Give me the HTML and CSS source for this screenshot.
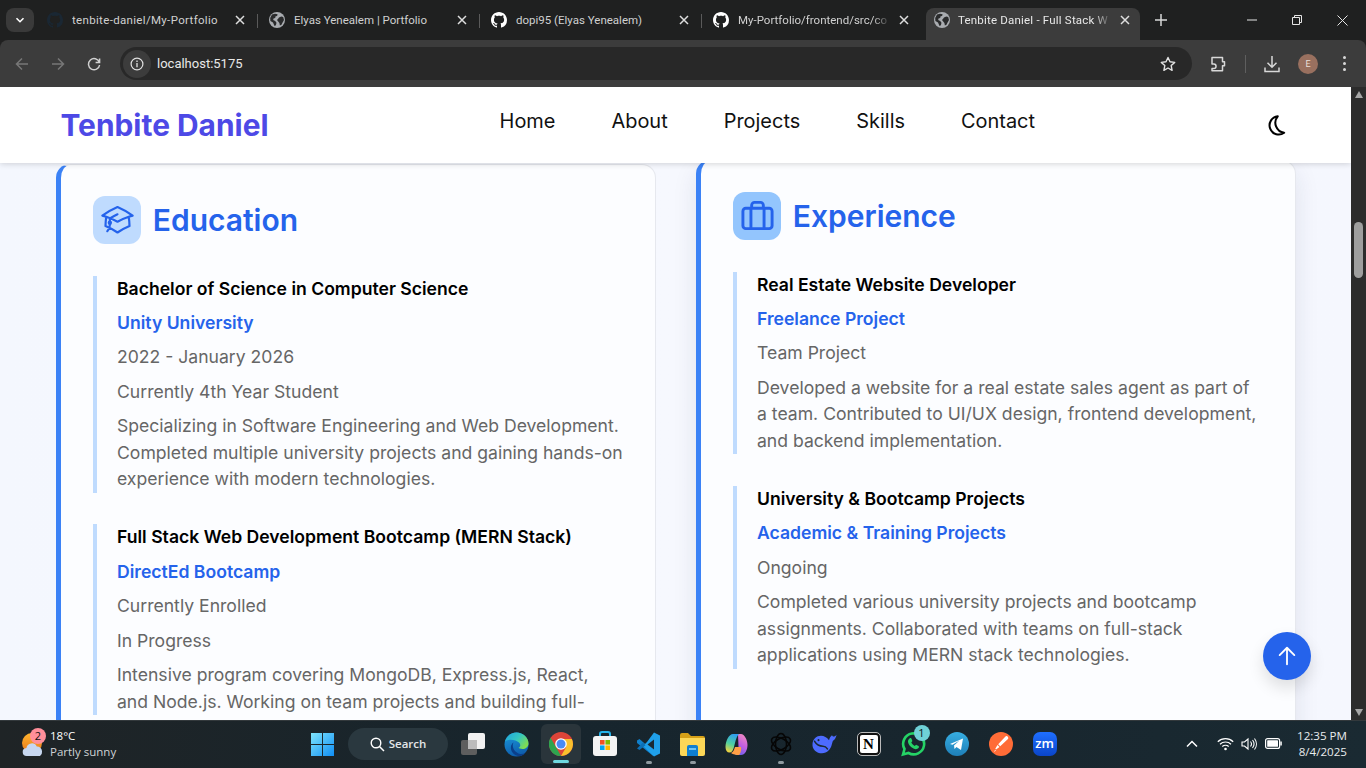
FILE: index.html
```html
<!DOCTYPE html>
<html lang="en">
<head>
<meta charset="utf-8">
<title>Tenbite Daniel - Full Stack Web Developer</title>
<link rel="stylesheet" href="styles.css">
</head>
<body>
<svg class="defs" width="0" height="0" aria-hidden="true">
  <symbol id="gh" viewBox="0 0 16 16"><path fill="currentColor" d="M8 0C3.58 0 0 3.58 0 8c0 3.54 2.29 6.53 5.47 7.59.4.07.55-.17.55-.38 0-.19-.01-.82-.01-1.49-2.01.37-2.53-.49-2.69-.94-.09-.23-.48-.94-.82-1.13-.28-.15-.68-.52-.01-.53.63-.01 1.08.58 1.23.82.72 1.21 1.87.87 2.33.66.07-.52.28-.87.51-1.07-1.78-.2-3.64-.89-3.64-3.95 0-.87.31-1.59.82-2.15-.08-.2-.36-1.02.08-2.12 0 0 .67-.21 2.2.82.64-.18 1.32-.27 2-.27.68 0 1.36.09 2 .27 1.53-1.04 2.2-.82 2.2-.82.44 1.1.16 1.92.08 2.12.51.56.82 1.27.82 2.15 0 3.07-1.87 3.75-3.65 3.95.29.25.54.73.54 1.48 0 1.07-.01 1.93-.01 2.2 0 .21.15.46.55.38A8.013 8.013 0 0016 8c0-4.42-3.58-8-8-8z"/></symbol>
  <symbol id="globe" viewBox="0 0 16 16"><circle cx="8" cy="8" r="8" fill="#a9acb0"/><path fill="#2a2b2c" d="M3 2.6l3-.9 2.6.5-.5 1.7-1.5.4-.4 1.6-1.7.6-.3 1.6 2 1 1.3 1.6-.6 2.6L5.5 14 4 10.6 1.4 9l-.2-3zM10 5.5l2.2-1 2 .6.8 3-1.4 2.3-1.1 2.4-1.6.7-.5-2.6-1.2-1.4-1.2-1.6 1.3-1.3z"/></symbol>
  <symbol id="x" viewBox="0 0 10 10"><path fill="none" stroke="currentColor" stroke-width="1.5" d="M1 1l8 8M9 1l-8 8"/></symbol>
</svg>

<header class="tabstrip">
  <button class="tabsearch"><svg width="10" height="10" viewBox="0 0 10 10"><path fill="none" stroke="#fff" stroke-width="1.6" d="M1.5 3.2L5 6.7l3.500-3.500"/></svg></button>
  <div class="tab"><svg class="fav fav-dark"><use href="#gh"/></svg><span class="tab-title tab-title-wide">tenbite-daniel/My-Portfolio</span><svg class="tab-x"><use href="#x"/></svg></div>
  <div class="tab"><svg class="fav"><use href="#globe"/></svg><span class="tab-title">Elyas Yenealem | Portfolio</span><svg class="tab-x"><use href="#x"/></svg></div>
  <div class="tab"><svg class="fav"><use href="#gh"/></svg><span class="tab-title">dopi95 (Elyas Yenealem)</span><svg class="tab-x"><use href="#x"/></svg></div>
  <div class="tab tab-last"><svg class="fav"><use href="#gh"/></svg><span class="tab-title tab-fade">My-Portfolio/frontend/src/co</span><svg class="tab-x"><use href="#x"/></svg></div>
  <div class="tab tab-active"><svg class="fav"><use href="#globe"/></svg><span class="tab-title tab-fade">Tenbite Daniel - Full Stack W</span><svg class="tab-x"><use href="#x"/></svg></div>
  <svg class="newtab" width="12" height="12" viewBox="0 0 12 12"><path fill="none" stroke="#d8d8d8" stroke-width="1.5" d="M6 0v12M0 6h12"/></svg>
  <div class="winctl">
    <svg width="10" height="10" viewBox="0 0 10 10"><path stroke="#e6e6e6" d="M0 5h10"/></svg>
    <svg width="10" height="10" viewBox="0 0 10 10"><path fill="none" stroke="#e6e6e6" d="M.5 2.500h7v7h-7zM2.500 2.500v-2h7v7h-2"/></svg>
    <svg width="11" height="11" viewBox="0 0 11 11"><path fill="none" stroke="#e6e6e6" d="M.5.5l10 10M10.500.5l-10 10"/></svg>
  </div>
</header>

<div class="toolbar">
  <svg class="tool" width="16" height="16" viewBox="0 0 16 16"><path fill="none" stroke="#777" stroke-width="1.500" d="M14 8H2.500M8 2.500L2.500 8 8 13.500"/></svg>
  <svg class="tool" width="16" height="16" viewBox="0 0 16 16"><path fill="none" stroke="#777" stroke-width="1.500" d="M2 8h11.500M8 2.500L13.500 8 8 13.500"/></svg>
  <svg class="tool" width="16" height="16" viewBox="0 0 16 16"><path fill="none" stroke="#d0d0d0" stroke-width="1.500" d="M13.300 6.200A5.600 5.600 0 1 0 13.600 9M13.600 2.500v4h-4"/></svg>
  <div class="omnibox">
    <span class="site-info"><svg width="14" height="14" viewBox="0 0 14 14"><circle cx="7" cy="7" r="5.900" fill="none" stroke="#e0e0e0" stroke-width="1.200"/><path stroke="#e0e0e0" stroke-width="1.300" d="M7 6v4.200M7 3.600v1.300"/></svg></span>
    <span class="url">localhost:5175</span>
    <svg class="star" width="16" height="16" viewBox="0 0 16 16"><path fill="none" stroke="#e3e3e3" stroke-width="1.400" stroke-linejoin="round" d="M8 1.500l2 4.300 4.700.6-3.500 3.200.9 4.700L8 12l-4.100 2.300.9-4.700L1.300 6.400 6 5.800z"/></svg>
  </div>
  <svg class="ext" width="18" height="18" viewBox="0 0 18 18"><path fill="none" stroke="#d8d8d8" stroke-width="1.500" stroke-linejoin="round" d="M3 2.500h10.500v4.200h2v4h-2v5H3v-2.200h1.800a2 2 0 0 0 0-4.500H3z"/></svg>
  <span class="toolsep"></span>
  <svg class="dl" width="16" height="18" viewBox="0 0 16 18"><path fill="none" stroke="#d8d8d8" stroke-width="1.500" d="M8 1v11M3.500 7.800L8 12.300l4.500-4.500M1 12.500v4h14v-4"/></svg>
  <span class="avatar">E</span>
  <span class="kebab"><i></i><i></i><i></i></span>
</div>

<div class="viewport">
  <div class="page">
    <nav class="navbar">
      <a class="logo">Tenbite Daniel</a>
      <ul class="links">
        <li>Home</li><li>About</li><li>Projects</li><li>Skills</li><li>Contact</li>
      </ul>
      <svg class="moon" width="22" height="22" viewBox="0 0 24 24"><path fill="none" stroke="#000" stroke-width="2.200" stroke-linejoin="round" d="M15 2.500A10 10 0 1 0 22 20.500 11 11 0 0 1 15 2.500z"/></svg>
    </nav>
    <main class="columns">
      <section class="card">
        <div class="card-head">
          <span class="icon-box"><svg width="35" height="35" viewBox="0 0 24 24"><path fill="none" stroke="#2563eb" stroke-width="1.500" stroke-linecap="round" stroke-linejoin="round" d="M4.260 10.147a60.438 60.438 0 0 0-.491 6.347A48.620 48.620 0 0 1 12 20.904a48.620 48.620 0 0 1 8.232-4.410 60.460 60.460 0 0 0-.491-6.347m-15.482 0a50.636 50.636 0 0 0-2.658-.813A59.906 59.906 0 0 1 12 3.493a59.903 59.903 0 0 1 10.399 5.840c-.896.248-1.783.520-2.658.814m-15.482 0A50.717 50.717 0 0 1 12 13.489a50.702 50.702 0 0 1 7.740-3.342M6.750 15a.750.750 0 1 0 0-1.500.750.750 0 0 0 0 1.500Zm0 0v-3.675A55.378 55.378 0 0 1 12 8.443m-7.007 11.550A5.981 5.981 0 0 0 6.750 15.750v-1.500"/></svg></span>
          <h2>Education</h2>
        </div>
        <article class="item">
          <h3>Bachelor of Science in Computer Science</h3>
          <p class="org">Unity University</p>
          <p>2022 - January 2026</p>
          <p>Currently 4th Year Student</p>
          <p>Specializing in Software Engineering and Web Development. Completed multiple university projects and gaining hands-on experience with modern technologies.</p>
        </article>
        <article class="item">
          <h3>Full Stack Web Development Bootcamp (MERN Stack)</h3>
          <p class="org">DirectEd Bootcamp</p>
          <p>Currently Enrolled</p>
          <p>In Progress</p>
          <p>Intensive program covering MongoDB, Express.js, React, and Node.js. Working on team projects and building full-</p>
        </article>
      </section>
      <section class="card card-raised">
        <div class="card-head">
          <span class="icon-box icon-box-strong"><svg width="35" height="35" viewBox="0 0 24 24"><path fill="none" stroke="#2563eb" stroke-width="2" stroke-linejoin="round" d="M4 7h16a2 2 0 0 1 2 2v10a2 2 0 0 1-2 2H4a2 2 0 0 1-2-2V9a2 2 0 0 1 2-2zM7.500 7v14M16.500 7v14M8 7V5a2 2 0 0 1 2-2h4a2 2 0 0 1 2 2v2"/></svg></span>
          <h2>Experience</h2>
        </div>
        <article class="item">
          <h3>Real Estate Website Developer</h3>
          <p class="org">Freelance Project</p>
          <p>Team Project</p>
          <p>Developed a website for a real estate sales agent as part of a team. Contributed to UI/UX design, frontend development, and backend implementation.</p>
        </article>
        <article class="item">
          <h3>University &amp; Bootcamp Projects</h3>
          <p class="org">Academic &amp; Training Projects</p>
          <p>Ongoing</p>
          <p>Completed various university projects and bootcamp assignments. Collaborated with teams on full-stack applications using MERN stack technologies.</p>
        </article>
      </section>
    </main>
    <button class="to-top"><svg width="22" height="22" viewBox="0 0 24 24"><path fill="none" stroke="#fff" stroke-width="2" stroke-linecap="round" stroke-linejoin="round" d="M12 21V3.500M4 11l8-8 8 8"/></svg></button>
  </div>
  <div class="scrollbar">
    <span class="arrow-up"></span>
    <span class="thumb"></span>
    <span class="arrow-down"></span>
  </div>
</div>

<footer class="taskbar">
  <div class="weather">
    <span class="weather-icon">
      <svg width="26" height="26" viewBox="0 0 26 26"><defs><linearGradient id="sun" x1="0" y1="0" x2="0" y2="1"><stop offset="0" stop-color="#ffb52e"/><stop offset="1" stop-color="#e8761a"/></linearGradient></defs><circle cx="12" cy="12" r="10" fill="url(#sun)"/><path fill="#c7d7f0" d="M7 25a4 4 0 0 1-.6-8 5.500 5.500 0 0 1 10.400-1.500A4.800 4.800 0 0 1 22 20v1a4 4 0 0 1-2 4z"/></svg>
      <b class="badge badge-red">2</b>
    </span>
    <span class="weather-text"><span class="temp">18°C</span><span class="cond">Partly sunny</span></span>
  </div>
  <div class="task-center">
    <svg class="winlogo" width="23" height="23" viewBox="0 0 24 24"><defs><linearGradient id="win" x1="0" y1="0" x2="1" y2="1"><stop offset="0" stop-color="#7fe4fb"/><stop offset="1" stop-color="#0f8ef5"/></linearGradient></defs><path fill="url(#win)" d="M0 0h11.500v11.500H0zM12.500 0H24v11.500H12.500zM0 12.500h11.500V24H0zM12.500 12.500H24V24H12.500z"/></svg>
    <div class="search"><svg width="15" height="15" viewBox="0 0 15 15"><circle cx="6" cy="6" r="4.800" fill="none" stroke="#fff" stroke-width="1.400"/><path stroke="#fff" stroke-width="1.500" d="M9.500 9.500L14 14"/></svg><span>Search</span></div>
    <ul class="apps">
      <li class="app">
        <svg width="26" height="24" viewBox="0 0 26 24"><rect x="1" y="8" width="16" height="15" rx="2" fill="#5e5e5e"/><rect x="8" y="1" width="17" height="16" rx="2" fill="#f2f2f2"/><rect x="8" y="8" width="9" height="9" fill="#bcbcbc"/></svg>
      </li>
      <li class="app">
        <svg width="25" height="25" viewBox="0 0 25 25"><defs><linearGradient id="edge1" x1="0" y1="0" x2="1" y2=".6"><stop offset="0" stop-color="#1fa3e0"/><stop offset=".55" stop-color="#34c6c0"/><stop offset="1" stop-color="#7fdc52"/></linearGradient><linearGradient id="edge2" x1="0" y1="0" x2=".3" y2="1"><stop offset="0" stop-color="#1c9bdf"/><stop offset="1" stop-color="#0e5fae"/></linearGradient></defs><circle cx="12.500" cy="12.500" r="12" fill="url(#edge2)"/><path fill="url(#edge1)" d="M1 9.500C2.500 4 7 .5 12.500.5c6.500 0 12 5 12 11 0 3.500-3 5.500-6 5.500-2 0-3.500-.5-4-1.200 2-.8 2.500-3.300.5-5.300C12 7.500 4.500 6.500 1 9.500z"/><path fill="#0b3f8a" d="M9.500 10.500c-3 2-3.500 6.500-1 10 1.500 2 4 3.500 6.500 3.700 2.500-.3 4.500-1.300 6.200-3-3 1.500-7 1-9.700-1.700-2.500-2.500-3.500-6-2-9z"/></svg>
      </li>
      <li class="app app-active">
        <svg width="24" height="24" viewBox="0 0 24 24"><circle cx="12" cy="12" r="12" fill="#dd4438"/><path fill="#2ea44f" d="M1.600 5.800L7.500 16l4.500 8A12 12 0 0 1 1.600 5.800z"/><path fill="#fbc02d" d="M12 7h10.900A12 12 0 0 1 12 24l5.200-9z"/><circle cx="12" cy="12" r="5.800" fill="#fff"/><circle cx="12" cy="12" r="4.500" fill="#4a8af4"/></svg>
        <i class="active-mark"></i>
      </li>
      <li class="app">
        <svg width="24" height="26" viewBox="0 0 24 26"><path fill="none" stroke="#26b4ea" stroke-width="2" d="M7 7V3a2 2 0 0 1 2-2h6a2 2 0 0 1 2 2v4"/><rect y="5" width="24" height="20" rx="3" fill="#f4f4f4"/><path fill="#f25022" d="M7 9h4.600v4.600H7z"/><path fill="#7fba00" d="M12.400 9H17v4.600h-4.600z"/><path fill="#00a4ef" d="M7 14.400h4.600V19H7z"/><path fill="#ffb900" d="M12.400 14.400H17V19h-4.600z"/></svg>
      </li>
      <li class="app app-open">
        <svg width="25" height="25" viewBox="0 0 25 25"><path fill="#0f7fcb" d="M1 8.500l2.500-1.500L19 20.500l-1.800 3.500L1 11z"/><path fill="#1fa0ea" d="M18 .5l6 3v18l-6 3-11-10.500 4-4z"/><path fill="#1b2a33" d="M18 7.500v10l-6.500-5z"/><path fill="#0c6fb5" d="M1 16.500l2.500 1.500 6-4.700-2.500-2.700z"/></svg>
        <i class="open-mark"></i>
      </li>
      <li class="app app-open">
        <svg width="25" height="23" viewBox="0 0 25 23"><path fill="#d6a017" d="M0 2a2 2 0 0 1 2-2h6l3 3h12a2 2 0 0 1 2 2v3H0z"/><path fill="#fcd757" d="M0 5h25v16a2 2 0 0 1-2 2H2a2 2 0 0 1-2-2z"/><path fill="#0f7fd0" d="M7 14a2 2 0 0 1 2-2h7a2 2 0 0 1 2 2v9H7z"/><path fill="#6cc3f5" d="M9 15h7v2H9z"/></svg>
        <i class="open-mark"></i>
      </li>
      <li class="app">
        <svg width="23" height="23" viewBox="0 0 23 23"><defs><linearGradient id="cop1" x1=".6" y1="0" x2=".3" y2="1"><stop offset="0" stop-color="#2f9df0"/><stop offset=".55" stop-color="#4fd0a0"/><stop offset="1" stop-color="#f6d33c"/></linearGradient><linearGradient id="cop2" x1=".7" y1="0" x2=".3" y2="1"><stop offset="0" stop-color="#f08ac0"/><stop offset=".5" stop-color="#c35fe0"/><stop offset="1" stop-color="#6a5ef0"/></linearGradient></defs><path fill="url(#cop2)" d="M13 1h3c3.500 0 6.500 6 6.500 11 0 5-2.500 10-6.500 10h-6c2-2 3-4 3.500-8z"/><path fill="url(#cop1)" d="M14 1H8C4 1 .5 8 .5 14c0 3.500 1.500 5.500 4 5.500 2.500 0 3.500-2 4.500-5.500 1-3.500 2-10 5-13z"/><path fill="#ff9f45" d="M6 20c2 1.500 5 2 8 2 1.500-1 2.500-5 2-8h-6c-1 3-1.500 5-4 6z"/></svg>
      </li>
      <li class="app app-open">
        <svg width="24" height="24" viewBox="0 0 24 24"><g fill="none" stroke="#060606" stroke-width="1.500"><ellipse cx="12" cy="12" rx="5.500" ry="10.500"/><ellipse cx="12" cy="12" rx="5.500" ry="10.500" transform="rotate(60 12 12)"/><ellipse cx="12" cy="12" rx="5.500" ry="10.500" transform="rotate(120 12 12)"/></g></svg>
        <i class="open-mark"></i>
      </li>
      <li class="app">
        <svg width="25" height="22" viewBox="0 0 25 20" preserveAspectRatio="none"><path fill="#4d6bfe" d="M9 2.500c3 0 6 1.500 8 4 .5-2 1.500-3.500 3-4.500.5 1 1.300 1.500 2.200 1.200.8-.3 1.500-.8 2.300-1.700-.3 2-1.500 4.500-3.500 5.500-.5 1-.8 2-1.200 3.500-1 4-4.500 8-9.800 8C4.500 18.500 0 15 .5 10 .8 5.500 4.500 2.500 9 2.500z"/><path fill="none" stroke="#1b2a33" stroke-width="1.400" stroke-linecap="round" d="M2.500 7.500c2 3 5.500 4.500 8.500 4.500 1.800 0 3.300.8 4.500 2.500"/><circle cx="6.500" cy="6.500" r="1" fill="#1b2a33"/></svg>
      </li>
      <li class="app"><span class="notion">N</span></li>
      <li class="app">
        <span class="wa-wrap">
          <svg width="26" height="26" viewBox="0 0 26 26"><path fill="none" stroke="#25d366" stroke-width="2.600" d="M3 23.500l1.500-5.500a10.500 10.500 0 1 1 4 4z"/><path fill="#25d366" d="M9.500 7.500c1-.7 1.700-.5 2 .3l.8 2c.1.500-.7 1.300-1 1.700.7 1.500 2 2.700 3.500 3.500.5-.4 1.200-1.300 1.700-1.100l2 1c.7.400.5 1.500 0 2.200-1 1.200-3 1.400-5 .5-3-1.300-5-3.600-5.500-6.500-.1-1.500.4-2.800 1.500-3.600z"/></svg>
          <b class="badge badge-teal">1</b>
        </span>
      </li>
      <li class="app">
        <svg width="24" height="24" viewBox="0 0 24 24"><defs><linearGradient id="tg" x1="0" y1="0" x2="0" y2="1"><stop offset="0" stop-color="#37aee2"/><stop offset="1" stop-color="#1e7fb8"/></linearGradient></defs><circle cx="12" cy="12" r="12" fill="url(#tg)"/><path fill="#fff" d="M5 12l13-5.500-2 11.500-4.500-3-2 2-.5-3.500 5.500-5-7 4.300z"/></svg>
      </li>
      <li class="app">
        <svg width="24" height="24" viewBox="0 0 24 24"><circle cx="12" cy="12" r="12" fill="#ff6c37"/><path fill="#fff" d="M18.500 4.500c1 .8 1 2 .2 2.800l-7.500 7-2-2 7-7.500c.7-.7 1.600-1 2.300-.3z"/><path fill="#fff" d="M8.500 13l2 2-3.500 2.500-.7-.7zM6 18l1 .5-2 1.500z"/></svg>
      </li>
      <li class="app"><span class="zoom">zm</span></li>
    </ul>
  </div>
  <div class="tray">
    <svg class="tray-chev" width="12" height="8" viewBox="0 0 12 8"><path fill="none" stroke="#fff" stroke-width="1.500" d="M1 6.500L6 1.500l5 5"/></svg>
    <svg class="tray-wifi" width="17" height="14" viewBox="0 0 17 14"><g fill="none" stroke="#fff" stroke-width="1.200"><path d="M.8 4.800a11 11 0 0 1 15.400 0M3 7.200a8 8 0 0 1 11 0M5.300 9.500a4.700 4.700 0 0 1 6.400 0"/></g><circle cx="8.500" cy="12" r="1.300" fill="#fff"/></svg>
    <svg class="tray-vol" width="17" height="14" viewBox="0 0 17 14"><g fill="none" stroke="#fff" stroke-width="1.100"><path d="M1 5v4h2.500L7 12V2L3.500 5z"/><path d="M9.500 4.500a4 4 0 0 1 0 5M11.500 3a6.500 6.500 0 0 1 0 8M13.500 1.500a9 9 0 0 1 0 11"/></g></svg>
    <svg class="tray-bat" width="17" height="11" viewBox="0 0 17 11"><rect x=".6" y=".6" width="14" height="9.800" rx="2" fill="none" stroke="#fff" stroke-width="1.200"/><rect x="2.200" y="2.200" width="10.800" height="6.600" rx=".6" fill="#fff"/><rect x="15.300" y="3.500" width="1.500" height="4" fill="#fff"/></svg>
    <div class="clock"><span>12:35 PM</span><span>8/4/2025</span></div>
  </div>
</footer>
</body>
</html>
```
FILE: styles.css
```css
* { box-sizing: border-box; margin: 0; padding: 0; }
html, body { height: 100%; overflow: hidden; }
body { display: flex; flex-direction: column; width: 1366px; height: 768px; font-family: Inter, "Liberation Sans", sans-serif; background: #202020; }
ul { list-style: none; }
button { border: 0; font: inherit; }
.defs { position: absolute; }

.tabstrip { flex: 0 0 40px; display: flex; align-items: center; background: #1f2020; color: #d0d0d0; font: 11.500px/16px Roboto, "Noto Sans", sans-serif; position: relative; }
.tabsearch { width: 28px; height: 24px; margin: 0 2px 0 6px; border-radius: 8px; background: #3a3a3a; display: flex; align-items: center; justify-content: center; }
.tab { width: 222px; height: 32px; margin-top: 8px; display: flex; align-items: center; padding: 0 0 8px 11px; position: relative; }
.tab::after { content: ""; position: absolute; right: 0; top: 6px; height: 14px; width: 1px; background: #5a5a5a; }
.tab-last { width: 224px; }
.tab-last::after, .tab-active::after { display: none; }
.fav { width: 16px; height: 16px; flex: none; margin-right: 9px; color: #fff; }
.fav-dark { color: #1a2733; }
.tab-title { flex: 1; min-width: 0; white-space: nowrap; overflow: hidden; }
.tab-title-wide { letter-spacing: .33px; }
.tab-fade { -webkit-mask-image: linear-gradient(to right, #000 88%, transparent 100%); mask-image: linear-gradient(to right, #000 88%, transparent 100%); }
.tab-x { width: 10px; height: 10px; flex: none; margin: 0 13px 0 8px; color: #dedede; }
.tab-last .tab-x { margin-right: 17px; }
.tab-active { width: 214px; height: 32px; background: #3c3c3c; border-radius: 8px 8px 0 0; padding-left: 8px; color: #e8e8e8; }
.tab-active .tab-title { letter-spacing: .2px; }
.tab-active .fav { margin-right: 8px; }
.tab-active .tab-x { margin-right: 10px; }
.newtab { margin-left: 15px; }
.winctl { margin-left: auto; display: flex; align-items: center; gap: 35px; padding-right: 18px; }

.toolbar { flex: 0 0 47px; display: flex; align-items: center; background: #3c3c3c; padding-left: 14px; border-radius: 8px 8px 0 0; }
.tool { margin-right: 20px; flex: none; }
.tool:nth-child(3) { margin-right: 18px; }
.omnibox { width: 1072px; height: 33px; border-radius: 17px; background: #282828; display: flex; align-items: center; padding-right: 16px; color: #e8e8e8; font: 13px/16px Roboto, "Noto Sans", sans-serif; flex: none; }
.site-info { width: 28px; height: 28px; margin-left: 3px; border-radius: 50%; background: #3c3c3c; display: flex; align-items: center; justify-content: center; }
.url { margin-left: 6px; }
.star { margin-left: auto; }
.ext { margin-left: 17px; flex: none; }
.toolsep { width: 1px; height: 18px; background: #5f5f5f; margin: 0 18px; flex: none; }
.dl { flex: none; }
.avatar { width: 20px; height: 20px; margin-left: 18px; border-radius: 50%; background: #99705f; color: #eadfd9; font: 9px/20px Roboto, sans-serif; text-align: center; flex: none; }
.kebab { display: flex; flex-direction: column; gap: 3px; margin-left: 25px; }
.kebab i { display: block; width: 3px; height: 3px; border-radius: 50%; background: #d8d8d8; }

.viewport { flex: 0 0 633px; display: flex; min-height: 0; }
.page { flex: 1; min-width: 0; position: relative; overflow: hidden; background: linear-gradient(90deg, #f4f7fe, #f6f8fe 50%, #f5f7fe); }
.navbar { position: relative; z-index: 2; height: 76px; display: flex; align-items: center; justify-content: space-between; padding: 0 65px 0 60.500px; background: #fff; box-shadow: 0 1px 6px rgba(0,0,0,.16); }
.logo { font-size: 29.900px; line-height: 36px; font-weight: 700; color: #4d49e6; }
.links { display: flex; gap: 56px; margin-left: 2px; font-size: 19.950px; line-height: 28px; color: #111; padding-bottom: 8px; }

.columns { display: grid; grid-template-columns: 600px 600px; gap: 40px; padding: 1px 0 0 56.400px; height: 600px; }
.card { background: #fcfdff; border: 1px solid #e6e8ee; border-left: 5px solid #3b82f6; border-radius: 14px; padding: 30.640px 32px 0 32px; height: 800px; }
.card-raised { margin-top: -4px; box-shadow: 0 10px 24px rgba(30,40,80,.1); }
.card-head { display: flex; align-items: center; gap: 11.400px; margin-bottom: 32px; }
.icon-box { width: 48px; height: 48px; border-radius: 12px; background: #bfdbfe; display: flex; align-items: center; justify-content: center; flex: none; }
.icon-box-strong { background: #93c5fd; }
h2 { font-size: 30px; line-height: 40px; font-weight: 600; color: #2563eb; }
.item { border-left: 4px solid #bfdbfe; padding-left: 19.600px; margin-bottom: 31.900px; }
h3 { font-size: 17.600px; line-height: 26.420px; font-weight: 600; color: #000; margin-bottom: 8px; }
.item p { font-size: 17.600px; line-height: 26.420px; color: #666; margin-bottom: 8px; }
.item p:last-child { margin-bottom: 0; }
.item .org { color: #2563eb; font-weight: 600; }

.to-top { position: absolute; right: 40px; top: 545px; z-index: 3; width: 48px; height: 48px; border-radius: 50%; background: #2563eb; display: flex; align-items: center; justify-content: center; box-shadow: 0 8px 16px rgba(0,0,0,.12); }

.scrollbar { flex: 0 0 15px; background: #2c2c2c; display: flex; flex-direction: column; align-items: center; padding: 4px 0; }
.arrow-up { border: 4.500px solid transparent; border-top: 0; border-bottom: 7px solid #a6a6a6; }
.thumb { width: 9px; height: 56px; border-radius: 5px; background: #9e9e9e; margin-top: 124px; }
.arrow-down { margin-top: auto; border: 4.500px solid transparent; border-bottom: 0; border-top: 7px solid #a6a6a6; }

.taskbar { flex: 0 0 48px; display: flex; align-items: center; position: relative; padding-bottom: 2px; background: linear-gradient(90deg, #1f2426, #17252d 40%, #18262e 70%, #1a2a32); border-top: 1px solid #33393c; color: #fff; font: 11.500px/15.500px "Open Sans", "Noto Sans", sans-serif; }
.weather { display: flex; align-items: center; width: 300px; padding-left: 20px; gap: 4px; }
.weather-icon { position: relative; width: 26px; height: 26px; }
.badge { position: absolute; width: 16px; height: 16px; border-radius: 50%; font: 400 11px/16px "Open Sans", sans-serif; text-align: center; color: #111; }
.badge-red { left: 10px; top: -3px; background: #ff8f9a; }
.badge-teal { right: -4px; top: -6px; background: #6fd1d6; }
.weather-text { display: flex; flex-direction: column; }
.temp { color: #fff; }
.cond { color: #cfd3d6; }
.task-center { display: flex; align-items: center; position: absolute; left: 311px; top: 0; height: 46px; }
.winlogo { margin-right: 14px; flex: none; }
.search { width: 100px; height: 32px; border-radius: 16px; background: #2a383f; display: flex; align-items: center; justify-content: center; gap: 4px; color: #e4e6e8; font-size: 11.500px; font-weight: 600; margin-right: 2.500px; }
.apps { display: flex; align-items: center; }
.app { width: 44px; height: 40px; display: flex; align-items: center; justify-content: center; position: relative; }
.app-active { width: 40px; margin: 0 2px; background: #2a353b; border-radius: 6px; }
.active-mark { position: absolute; bottom: 1px; left: 12px; width: 16px; height: 3px; border-radius: 2px; background: #6fd8e0; }
.open-mark { position: absolute; bottom: 0; left: 19px; width: 6px; height: 3px; border-radius: 2px; background: #8f9aa0; }
.notion { width: 22px; height: 22px; background: #fff; border: 2px solid #111; outline: 1px solid #bbb; border-radius: 4px; color: #000; font: 700 15px/18px "Liberation Serif", serif; text-align: center; }
.wa-wrap { position: relative; width: 26px; height: 26px; }
.zoom { width: 24px; height: 24px; border-radius: 7px; background: linear-gradient(#1f6fff, #0a45c9); color: #fff; font: 600 13px/23px "Open Sans", sans-serif; text-align: center; }
.tray { margin-left: auto; display: flex; align-items: center; padding-right: 19px; }
.tray-chev { margin-right: 19px; }
.tray-wifi { margin-right: 7.500px; }
.tray-vol { margin-right: 7px; }
.tray-bat { margin-right: 15px; }
.clock { display: flex; flex-direction: column; align-items: flex-end; font-size: 11.600px; line-height: 16px; color: #e9ecee; }
```
